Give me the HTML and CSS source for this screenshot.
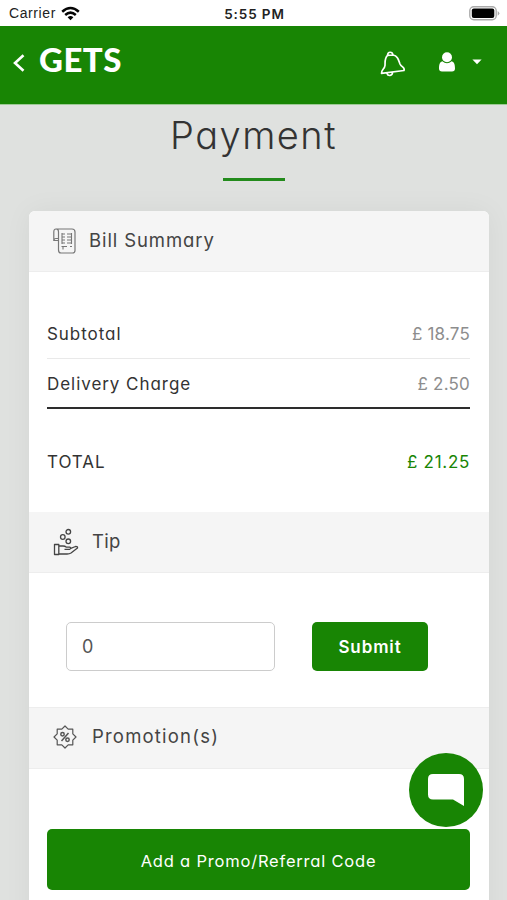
FILE: index.html
```html
<!DOCTYPE html>
<html lang="en">
<head>
<meta charset="utf-8">
<title>GETS Payment</title>
<link rel="stylesheet" href="styles.css">
</head>
<body>
<div class="status">
  <div class="carrier"><span>Carrier</span>
    <svg width="19" height="15" viewBox="0 0 19 15" fill="none" stroke="#050505" stroke-width="2.5"><path d="M1.2 5.7Q9.5-1.8 17.8 5.7M4.2 9Q9.5 4.2 14.8 9"/><path d="M9.5 14.2 6.6 11.3Q9.5 8.6 12.4 11.3Z" fill="#050505" stroke="none"/></svg>
  </div>
  <div class="time">5:55 PM</div>
  <svg class="battery" width="31" height="15" viewBox="0 0 31 15"><rect x=".8" y=".8" width="26.4" height="13" rx="4" fill="#fff" stroke="#aaa" stroke-width="1.4"/><rect x="2.8" y="2.6" width="22.5" height="9.4" rx="2" fill="#000"/><path d="M28.7 5Q32 7.3 28.7 9.7Z" fill="#aaa"/></svg>
</div>
<header class="navbar">
  <svg class="back" width="12" height="18" viewBox="0 0 12 18" fill="none" stroke="#fff" stroke-width="2.6"><path d="M10.5 1.2 2 9l8.500 7.800"/></svg>
  <div class="brand">GETS</div>
  <svg class="bell" width="26" height="26" viewBox="0 0 26 26" fill="none" stroke="#fff" stroke-width="1.7" stroke-linejoin="round" stroke-linecap="round"><path d="M7.500 4.300C4.500 7 5.200 11 5 14.500 4.700 18 1.200 19 1.500 22.300L24 19.500C25.300 16 21.500 16.500 20 13 18.500 9 18 5 13 4ZM7.500 4.300C7.800.3 12.300.3 13 4M7 22.500C8 25.500 12.400 25 12.500 21.500"/></svg>
  <svg class="user" width="18" height="20" viewBox="0 0 18 20" fill="#fff"><circle cx="9" cy="5.200" r="5"/><path d="M4.300 9.300Q9 13 13.700 9.300C16.500 10 17 13.500 17 16.500Q17 19.500 14 19.500H4Q1 19.500 1 16.500C1 13.500 1.500 10 4.300 9.300Z"/></svg>
  <svg class="caret" width="10" height="6" viewBox="0 0 10 6"><path d="M.4.500h9.200L5 5.300Z" fill="#fff"/></svg>
</header>
<main class="page">
  <h1>Payment</h1>
  <div class="rule"></div>
  <section class="card">
    <h2 class="head head-bill">
      <svg width="24" height="26" viewBox="0 0 24 26" fill="none" stroke="#777" stroke-width="1.200"><path d="M3.500 1H19Q22 1 22 4V22.500Q22 25 19.500 25H8Q5.500 25 5.500 22V4Q5.500 1 3 1 .8 1 .8 4V12.500H5.500M1 12.500Q1 10.500 3 10.500H5.500"/><path d="M8.500 6H12M14 6H19M8.500 9H12M14 9H19M8.500 12H12M14 12H19M8.500 15H12M14 15H19M8.500 18.500H14M17 18.500H19M9 5V16M18.500 5V16M10 19V21.500" stroke-width="1.100"/></svg>
      <span class="t-bill">Bill Summary</span>
    </h2>
    <div class="bill">
      <div class="row"><span class="label">Subtotal</span><span class="amount">£ 18.75</span></div>
      <div class="row row-last"><span class="label">Delivery Charge</span><span class="amount">£ 2.50</span></div>
      <div class="row row-total"><span class="label">TOTAL</span><span class="amount sum">£ 21.25</span></div>
    </div>
    <h2 class="head head-tip">
      <svg width="26" height="28" viewBox="0 0 26 28" fill="none" stroke="#444" stroke-width="1.300" stroke-linejoin="round"><circle cx="15.300" cy="3.800" r="2.300"/><circle cx="9.800" cy="9" r="2.300"/><circle cx="15.300" cy="13.300" r="2.300"/><path d="M1.500 16.500H5.800V26.500H1.500ZM5.800 18H10Q12 18 13.500 19.200H17Q18.500 20.300 16.800 21.300H11.500M17.800 20.300 22.500 18.500Q25 18.300 24.500 20L18 25Q16.500 26 14 26H5.800"/></svg>
      <span class="t-tip">Tip</span>
    </h2>
    <form class="tip">
      <input type="text" value="0" aria-label="Tip">
      <button type="button">Submit</button>
    </form>
    <h2 class="head head-promo">
      <svg width="24" height="24" viewBox="0 0 24 24" fill="none" stroke="#555" stroke-width="1.200" stroke-linejoin="round"><path d="M12 1 15.200 4.200H19.800V8.800L23 12 19.800 15.200V19.800H15.200L12 23 8.800 19.800H4.200V15.200L1 12 4.200 8.800V4.200H8.800Z"/><g stroke-width="1.500"><circle cx="9.500" cy="9.300" r="1.700"/><circle cx="14.500" cy="14.700" r="1.700"/><path d="M15.500 8 8.500 16"/></g></svg>
      <span class="t-promo">Promotion(s)</span>
    </h2>
    <div class="promo"><button type="button">Add a Promo/Referral Code</button></div>
  </section>
</main>
<div class="chat"><svg width="38" height="34" viewBox="0 0 38 34"><path d="M6 1H32Q37 1 37 6V33L26 26.500H6Q1 26.500 1 21.500V6Q1 1 6 1Z" fill="#fff"/></svg></div>
</body>
</html>
```

FILE: styles.css
```css
* { box-sizing: border-box; }
body {
  margin: 0;
  height: 900px;
  overflow: hidden;
  background: #dfe1df;
  color: #333;
  font-family: Inter, "Open Sans", sans-serif;
  font-feature-settings: "cv11";
}
button, input { font: inherit; font-feature-settings: inherit; }
svg { display: block; flex: none; }
.status {
  height: 26px;
  padding: 0 7px 0 9px;
  background: #fff;
  color: #222;
  display: grid;
  grid-template-columns: 1fr auto 1fr;
  align-items: center;
  font: 14px "Liberation Sans", sans-serif;
}
.carrier { display: flex; gap: 5px; align-items: center; letter-spacing: .6px; }
.time { font: 600 13.5px Inter, sans-serif; letter-spacing: .9px; padding-top: 1px; }
.battery { justify-self: end; }
.navbar {
  height: 79px;
  padding: 0 25px 0 13px;
  background: #188504;
  border-bottom: 1px solid #9dca95;
  display: flex;
  align-items: center;
}
.back { margin-top: -4px; }
.brand {
  margin: -12px 0 0 14px;
  color: #fff;
  font: 900 33px Lato, sans-serif;
  letter-spacing: .5px;
}
.bell { margin: -2px 0 0 auto; }
.user { margin: -7px 0 0 32px; }
.caret { margin: -6px 0 0 16px; }
h1 {
  margin: 0;
  padding-top: 8px;
  text-align: center;
  font-size: 38px;
  line-height: 44px;
  font-weight: 300;
  letter-spacing: 1.5px;
}
.rule { width: 62px; height: 3px; margin: 21px auto 30px; background: #238b1c; }
.card {
  width: 460px;
  height: 720px;
  margin-left: 29px;
  background: #fff;
  border-radius: 6px 6px 0 0;
  overflow: hidden;
  box-shadow: 0 0 28px rgba(0,0,0,.05);
}
.head {
  margin: 0;
  height: 61px;
  padding: 0 24px;
  display: flex;
  align-items: center;
  background: #f5f5f5;
  border-bottom: 1px solid #ededed;
  font-size: 18.5px;
  font-weight: 400;
  color: #444;
}
.head span { margin-top: -2px; }
.head-bill { gap: 12px; }
.head-tip { gap: 13px; }
.head-promo { height: 62px; gap: 15px; border-top: 1px solid #ededed; padding-bottom: 2px; }
.t-bill { letter-spacing: .9px; }
.t-tip { letter-spacing: .3px; }
.t-promo { letter-spacing: 1.2px; }
.bill { height: 240px; padding: 37px 19px 0 18px; font-size: 17px; }
.row {
  height: 50px;
  display: flex;
  justify-content: space-between;
  align-items: center;
  border-bottom: 2px solid #e9e9e9;
}
.row:first-child { border-bottom-width: 1px; }
.row-last { border-bottom-color: #2d2d2d; padding-top: 1px; }
.row-total { height: 105px; border: 0; }
.label { letter-spacing: .95px; }
.amount { color: #8d8d8d; letter-spacing: .2px; }
.sum { color: #188504; letter-spacing: .7px; }
.tip { height: 134px; padding: 49px 37px 0; display: flex; gap: 37px; align-items: flex-start; }
.tip input {
  width: 209px;
  height: 49px;
  padding: 0 15px;
  border: 1px solid #ccc;
  border-radius: 5px;
  background: #fff;
  color: #555;
  font-size: 18px;
}
.tip button, .promo button {
  border: 0;
  border-radius: 5px;
  background: #188504;
  color: #fff;
  padding: 0;
}
.tip button { width: 116px; height: 49px; font-size: 17px; font-weight: 600; letter-spacing: .9px; }
.promo { padding: 60px 19px 0 18px; }
.promo button { width: 100%; height: 61px; font-size: 16.5px; letter-spacing: .8px; padding-top: 2px; }
.chat {
  position: absolute;
  left: 409px;
  top: 753px;
  width: 74px;
  height: 74px;
  border-radius: 50%;
  background: #188504;
  display: grid;
  place-items: center;
}
```
